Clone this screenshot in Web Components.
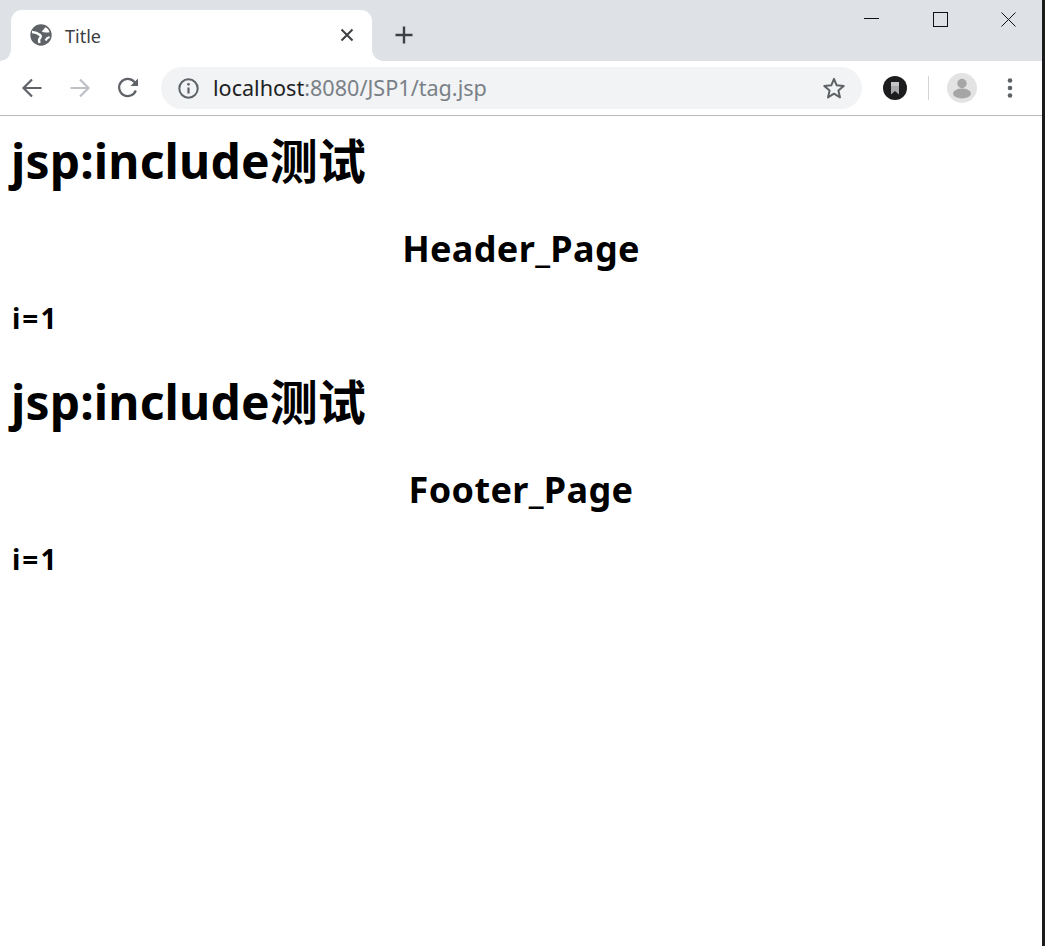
<!DOCTYPE html>
<html>
<head>
<meta charset="utf-8">
<title>Title</title>
<style>
  html, body { margin: 0; height: 100%; background: #fff; overflow: hidden; }
</style>
</head>
<body>
<browser-window>
  <browser-tabstrip slot="chrome"></browser-tabstrip>
  <browser-toolbar slot="chrome"></browser-toolbar>
  <include-section title-text="jsp:include测试" page-name="Header_Page" counter="i=1"></include-section>
  <include-section title-text="jsp:include测试" page-name="Footer_Page" counter="i=1"></include-section>
</browser-window>

<script>
class BrowserWindow extends HTMLElement {
  constructor() {
    super();
    this.attachShadow({ mode: "open" });
  }
  connectedCallback() {
    this.shadowRoot.innerHTML = `
      <style>
        :host { display: flex; height: 946px; width: 1045px; box-sizing: border-box; border-right: 3px solid #1b1b1b; background: #fff; }
        .inner { flex: 1; min-width: 0; display: flex; flex-direction: column; }
        .page { padding: 0 12px; flex: 1; }
      </style>
      <div class="inner">
        <slot name="chrome"></slot>
        <div class="page"><slot></slot></div>
      </div>
    `;
  }
}

class BrowserTabstrip extends HTMLElement {
  constructor() {
    super();
    this.attachShadow({ mode: "open" });
  }
  connectedCallback() {
    this.shadowRoot.innerHTML = `
      <style>
        :host { display: flex; height: 61px; background: #dee1e6; box-sizing: border-box; padding: 10px 0 0 11px; }
        .tab { width: 361px; height: 51px; background: #fff; border-radius: 11px 11px 0 0; display: flex; align-items: center; box-sizing: border-box; padding: 0 16px 0 19px; position: relative; }
        .tab::before, .tab::after { content: ""; position: absolute; bottom: 0; width: 11px; height: 11px; }
        .tab::before { left: -11px; background: radial-gradient(circle at 0 0, #dee1e6 10.5px, #fff 11px); }
        .tab::after { right: -11px; background: radial-gradient(circle at 100% 0, #dee1e6 10.5px, #fff 11px); }
        .globe { width: 22px; height: 22px; flex: none; margin-top: -1px; }
        .label { margin-left: 13px; flex: 1; font: 18px/24px "Noto Sans", "Open Sans", sans-serif; color: #3c4043; margin-top: 1px; }
        .close { width: 18px; height: 18px; flex: none; margin-top: -1px; }
        .plus { width: 20px; height: 20px; margin: 15px 0 0 22px; flex: none; }
        .spacer { flex: 1; }
        .ctrl { width: 68.5px; height: 39px; margin-top: -10px; display: flex; align-items: center; justify-content: center; flex: none; }
        .ctrl:last-child { margin-right: -1px; }
        .ctrl svg { width: 15px; height: 15px; }
      </style>
      <div class="tab">
        <svg class="globe" viewBox="0 0 22 22"><circle cx="11" cy="11" r="10.7" fill="#5f6368"/><path d="M2 8c2.800.2 6 1.400 8 3 1.200 1 .8 2.300-.2 3.300-.8.900-.9 2.700-.3 4.700" stroke="#fff" stroke-width="2.400" fill="none"/><path d="M11.800 7.200c1.400-1 2.700-3 3.800-3.900 2 1 3.400 2.800 4 4.900-2.400.6-5.800.6-7.800-1z" fill="#fff"/><path d="M19.600 13c-1.600.5-3.300 1.700-4 3.500" stroke="#fff" stroke-width="2.200" fill="none"/></svg>
        <span class="label">Title</span>
        <svg class="close" viewBox="0 0 18 18"><path d="M3.500 3.500l11 11M14.500 3.500l-11 11" stroke="#3c4043" stroke-width="2" fill="none"/></svg>
      </div>
      <svg class="plus" viewBox="0 0 20 20"><path d="M10 1.500v17M1.500 10h17" stroke="#3c4043" stroke-width="2.400" fill="none"/></svg>
      <span class="spacer"></span>
      <span class="ctrl"><svg viewBox="0 0 15 15"><path d="M0 6.500h15" stroke="#111" stroke-width="1" fill="none"/></svg></span>
      <span class="ctrl"><svg viewBox="0 0 15 15"><rect x=".5" y=".5" width="14" height="14" stroke="#111" fill="none"/></svg></span>
      <span class="ctrl"><svg viewBox="0 0 15 15"><path d="M.5.500l14 14M14.500.500l-14 14" stroke="#111" stroke-width="1" fill="none"/></svg></span>
    `;
  }
}

class BrowserToolbar extends HTMLElement {
  constructor() {
    super();
    this.attachShadow({ mode: "open" });
  }
  connectedCallback() {
    this.shadowRoot.innerHTML = `
      <style>
        :host { display: flex; align-items: center; height: 55px; box-sizing: border-box; border-bottom: 1px solid #b9b9b9; background: #fff; padding: 0 0 0 20px; }
        svg { flex: none; display: block; }
        .nav { width: 24px; height: 24px; margin-right: 24px; }
        .omnibox { width: 701px; height: 42px; margin-left: -3px; border-radius: 21px; background: #f1f3f4; display: flex; align-items: center; box-sizing: border-box; padding: 0 16px 0 17px; flex: none; }
        .url { flex: 1; margin-left: 14px; font: 21.6px/28px "Noto Sans", "Open Sans", sans-serif; color: #7a8087; white-space: nowrap; }
        .url b { font-weight: 400; color: #202124; }
        .ext { margin-left: 21px; width: 24px; height: 24px; }
        .sep { width: 1px; height: 24px; background: #d4d5d7; margin: 0 18px 0 21px; flex: none; }
        .avatar { width: 30px; height: 30px; }
        .more { width: 6px; height: 22px; margin-left: 30px; margin-right: auto; }
      </style>
      <svg class="nav" viewBox="0 0 24 24"><path d="M21.500 12H4M12 3.500L3.500 12l8.500 8.500" stroke="#5f6368" stroke-width="2.200" fill="none"/></svg>
      <svg class="nav" viewBox="0 0 24 24"><path d="M2.500 12H20M12 3.500l8.500 8.500-8.500 8.500" stroke="#bdc1c6" stroke-width="2.200" fill="none"/></svg>
      <svg class="nav" viewBox="0 0 24 24"><path d="M19.800 14.500A8.600 8.600 0 1 1 18.200 5.800L21 8.500" stroke="#5f6368" stroke-width="2.200" fill="none"/><path d="M22 2.500V10h-7.500z" fill="#5f6368"/></svg>
      <div class="omnibox">
        <svg width="21" height="21" viewBox="0 0 21 21"><circle cx="10.500" cy="10.500" r="9.200" stroke="#5f6368" stroke-width="2" fill="none"/><path d="M10.500 9.500v6" stroke="#5f6368" stroke-width="2.200"/><circle cx="10.500" cy="6.300" r="1.400" fill="#5f6368"/></svg>
        <span class="url"><b>localhost</b>:8080/JSP1/tag.jsp</span>
        <svg width="24" height="24" viewBox="0 0 24 24"><path d="M12 2.800l2.700 6.500 7 .6-5.300 4.600 1.600 6.900L12 17.700l-6 3.700 1.600-6.900L2.300 9.900l7-.6z" stroke="#5f6368" stroke-width="2" stroke-linejoin="round" fill="none"/></svg>
      </div>
      <svg class="ext" viewBox="0 0 24 24"><circle cx="12" cy="12" r="12" fill="#1c1c1e"/><path d="M8 6h8v12.500L12 15l-4 3.500z" fill="#a9a9a9"/><path d="M8 6h8v4H8z" fill="#c4c4c4"/></svg>
      <span class="sep"></span>
      <svg class="avatar" viewBox="0 0 30 30"><circle cx="15" cy="15" r="15" fill="#e3e3e3"/><circle cx="15" cy="10.500" r="4.700" fill="#a6a6a6"/><ellipse cx="15" cy="20.500" rx="9" ry="5" fill="#a6a6a6"/></svg>
      <svg class="more" viewBox="0 0 6 22"><circle cx="3" cy="3.500" r="2.300" fill="#5f6368"/><circle cx="3" cy="11" r="2.300" fill="#5f6368"/><circle cx="3" cy="18.500" r="2.300" fill="#5f6368"/></svg>
    `;
  }
}

class IncludeSection extends HTMLElement {
  constructor() {
    super();
    this.attachShadow({ mode: "open" });
  }
  connectedCallback() {
    this.shadowRoot.innerHTML = `
      <style>
        :host { display: block; font-family: "Noto Sans", "Noto Sans CJK SC", sans-serif; color: #000; padding-bottom: 20px; }
        h1, h2, h3 { margin: 0; font-weight: 700; }
        h1 { font-size: 48px; line-height: 65px; padding-top: 12px; margin-left: -1px; letter-spacing: .15px; }
        h2 { font-size: 36px; line-height: 48px; text-align: center; margin-top: 32px; letter-spacing: .35px; }
        h3 { font-size: 28px; line-height: 37px; margin-top: 27px; letter-spacing: 2px; }
      </style>
      <h1>${this.getAttribute("title-text")}</h1>
      <h2>${this.getAttribute("page-name")}</h2>
      <h3>${this.getAttribute("counter")}</h3>
    `;
  }
}

customElements.define("browser-window", BrowserWindow);
customElements.define("browser-tabstrip", BrowserTabstrip);
customElements.define("browser-toolbar", BrowserToolbar);
customElements.define("include-section", IncludeSection);
</script>
</body>
</html>
